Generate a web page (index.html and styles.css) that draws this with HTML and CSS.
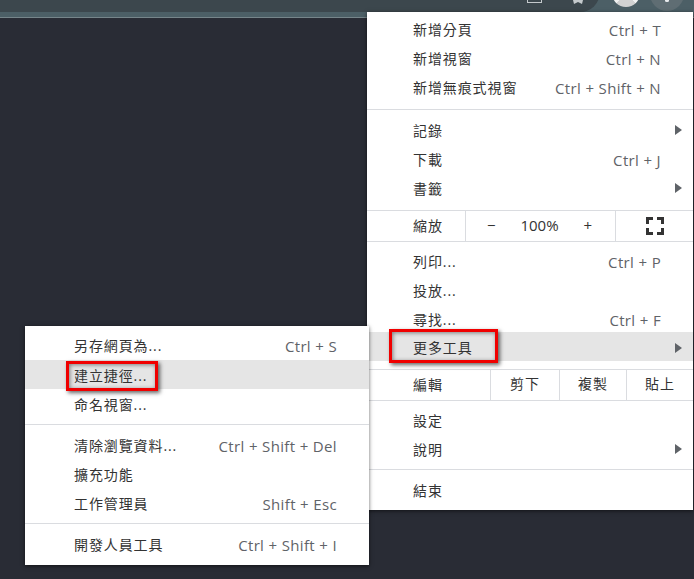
FILE: index.html
```html
<!DOCTYPE html>
<html lang="zh-Hant">
<head>
  <meta charset="UTF-8">
  <title>建立捷徑</title>
  <link rel="stylesheet" href="styles.css">
</head>
<body>

<header class="toolbar">
  <div class="omnibox">
    <div class="tab-icon"></div>
    <svg class="star" width="14" height="4" viewBox="0 0 14 4"><path d="M2 0H12L11 4L7 2L3 4Z" fill="#c4c9cc"/></svg>
  </div>
  <div class="avatar"></div>
  <div class="dots-wrap"><div class="dot"></div></div>
</header>

<div class="menu main-menu">
  <div class="row"><span>新增分頁</span><kbd>Ctrl + T</kbd></div>
  <div class="row"><span>新增視窗</span><kbd>Ctrl + N</kbd></div>
  <div class="row"><span>新增無痕式視窗</span><kbd>Ctrl + Shift + N</kbd></div>
  <hr>
  <div class="row"><span>記錄</span><i class="arrow"></i></div>
  <div class="row"><span>下載</span><kbd>Ctrl + J</kbd></div>
  <div class="row"><span>書籤</span><i class="arrow"></i></div>
  <hr class="before-tool">
  <div class="tool-row zoom-row">
    <span class="tool-label">縮放</span>
    <div class="zoom-controls">
      <span>−</span>
      <span>100%</span>
      <span>+</span>
    </div>
    <div class="full">
      <svg width="18" height="18" viewBox="0 0 18 18"><path d="M1.5 7V1.5H7M11 1.5H16.5V7M16.5 11V16.5H11M7 16.5H1.5V11" fill="none" stroke="#333" stroke-width="3"/></svg>
    </div>
  </div>
  <hr class="after-tool">
  <div class="row"><span>列印...</span><kbd>Ctrl + P</kbd></div>
  <div class="row"><span>投放...</span></div>
  <div class="row"><span>尋找...</span><kbd>Ctrl + F</kbd></div>
  <div class="row hover hover-tools"><span>更多工具</span><i class="arrow"></i><b class="mark mark-tools"></b></div>
  <hr class="before-tool edit-sep">
  <div class="tool-row edit-row">
    <span class="tool-label">編輯</span>
    <span class="edit-btn">剪下</span>
    <span class="edit-btn">複製</span>
    <span class="edit-btn">貼上</span>
  </div>
  <hr class="after-tool">
  <div class="row"><span>設定</span></div>
  <div class="row"><span>說明</span><i class="arrow"></i></div>
  <hr class="short">
  <div class="row"><span>結束</span></div>
</div>

<div class="menu sub-menu">
  <div class="row"><span>另存網頁為...</span><kbd>Ctrl + S</kbd></div>
  <div class="row hover hover-shortcut"><span>建立捷徑...</span><b class="mark mark-shortcut"></b></div>
  <div class="row"><span>命名視窗...</span></div>
  <hr class="short">
  <div class="row"><span>清除瀏覽資料...</span><kbd>Ctrl + Shift + Del</kbd></div>
  <div class="row"><span>擴充功能</span></div>
  <div class="row"><span>工作管理員</span><kbd>Shift + Esc</kbd></div>
  <hr class="short">
  <div class="row"><span>開發人員工具</span><kbd>Ctrl + Shift + I</kbd></div>
</div>

</body>
</html>
```

FILE: styles.css
```css
body {
  margin: 0;
  height: 579px;
  overflow: hidden;
  position: relative;
  background: #292c35;
  color: #333;
  font-family: "Open Sans", "Noto Sans CJK TC", sans-serif;
  font-size: 14px;
}

.toolbar {
  height: 17px;
  background: #4c5f66;
  border-bottom: 1px solid #76858a;
  display: flex;
  overflow: hidden;
}
.omnibox {
  width: 600px;
  height: 40px;
  margin-top: -28px;
  background: #3c474d;
  border-radius: 0 20px 20px 0;
  display: flex;
  justify-content: flex-end;
  flex-shrink: 0;
}
.tab-icon {
  width: 13px;
  height: 30px;
  border: 1px solid #c4c9cc;
  border-top: none;
  margin-right: 29px;
}
.star {
  margin-top: 28px;
  margin-right: 15px;
}
.avatar {
  width: 28px;
  height: 28px;
  margin: -21px 0 0 12px;
  border-radius: 50%;
  background: radial-gradient(ellipse 9px 5px at 50% 88%, #d2d2d2 98%, #f1f1f1);
  flex-shrink: 0;
}
.dots-wrap {
  width: 34px;
  height: 34px;
  margin: -23px 0 0 10px;
  border-radius: 50%;
  background: #5f6d73;
  flex-shrink: 0;
  position: relative;
}
.dot {
  position: absolute;
  left: 15px;
  top: 22px;
  width: 4px;
  height: 3px;
  background: #e8eaed;
  border-radius: 2px;
}

.menu {
  position: absolute;
  background: #fff;
  box-sizing: border-box;
  box-shadow: 0 1px 4px rgba(0,0,0,0.6);
}
.main-menu {
  left: 367px;
  top: 12px;
  width: 326px;
  padding: 4px 0;
}
.sub-menu {
  left: 25px;
  top: 326px;
  width: 344px;
  padding: 6px 0 5px;
}

.row {
  position: relative;
  box-sizing: border-box;
  height: 29px;
  display: flex;
  align-items: center;
  justify-content: space-between;
  padding: 0 32px 3px 46px;
  letter-spacing: 0.9px;
  white-space: nowrap;
}
.sub-menu .row {
  padding-left: 49px;
}
.row kbd {
  font-family: inherit;
  font-size: 15px;
  color: #5f6368;
  letter-spacing: 0.35px;
  margin-top: 2px;
}
.hover {
  background: #e5e5e5;
}
.main-menu .hover-tools {
  margin-top: -3px;
  padding-top: 4px;
}
.sub-menu .hover-shortcut {
  margin: -1px 0 2px;
  padding-top: 3px;
}
.arrow {
  position: absolute;
  right: 11px;
  top: 8px;
  border-left: 7px solid #5f6368;
  border-top: 5px solid transparent;
  border-bottom: 5px solid transparent;
}
.hover .arrow {
  top: 11px;
}

hr {
  border: none;
  height: 1px;
  background: #dadce0;
  margin: 6px 0 7px;
}
hr.short {
  margin: 4px 0 7px;
}
hr.before-tool {
  margin: 6px 0 0;
}
hr.edit-sep {
  margin-top: 8px;
}
hr.after-tool {
  margin: 0 0 6px;
}

.tool-row {
  height: 30px;
  display: grid;
  align-items: center;
  letter-spacing: 0.9px;
}
.zoom-row {
  grid-template-columns: 99px 150px 1fr;
}
.edit-row {
  grid-template-columns: 124px 69px 67px 1fr;
}
.tool-label {
  box-sizing: border-box;
  padding-left: 46px;
  height: 100%;
  line-height: 29px;
  border-right: 1px solid #dadce0;
}
.zoom-controls {
  height: 100%;
  box-sizing: border-box;
  border-right: 1px solid #dadce0;
  display: flex;
  align-items: center;
  justify-content: space-between;
  padding: 0 23px 2px 21px;
  font-size: 15px;
  letter-spacing: 0;
}
.full {
  display: flex;
  justify-content: center;
}
.full svg {
  display: block;
}
.edit-btn {
  box-sizing: border-box;
  height: 100%;
  line-height: 28px;
  text-align: center;
  border-right: 1px solid #dadce0;
}
.edit-btn:last-child {
  border-right: none;
}

.mark {
  position: absolute;
  box-sizing: border-box;
  border: 3px solid #f00000;
  box-shadow: 2px 2px 4px rgba(0,0,0,0.6), inset 1px 1px 4px rgba(0,0,0,0.45);
}
.mark-tools {
  left: 22px;
  top: -3px;
  width: 109px;
  height: 34px;
}
.mark-shortcut {
  left: 41px;
  top: 1px;
  width: 92px;
  height: 30px;
}
```
